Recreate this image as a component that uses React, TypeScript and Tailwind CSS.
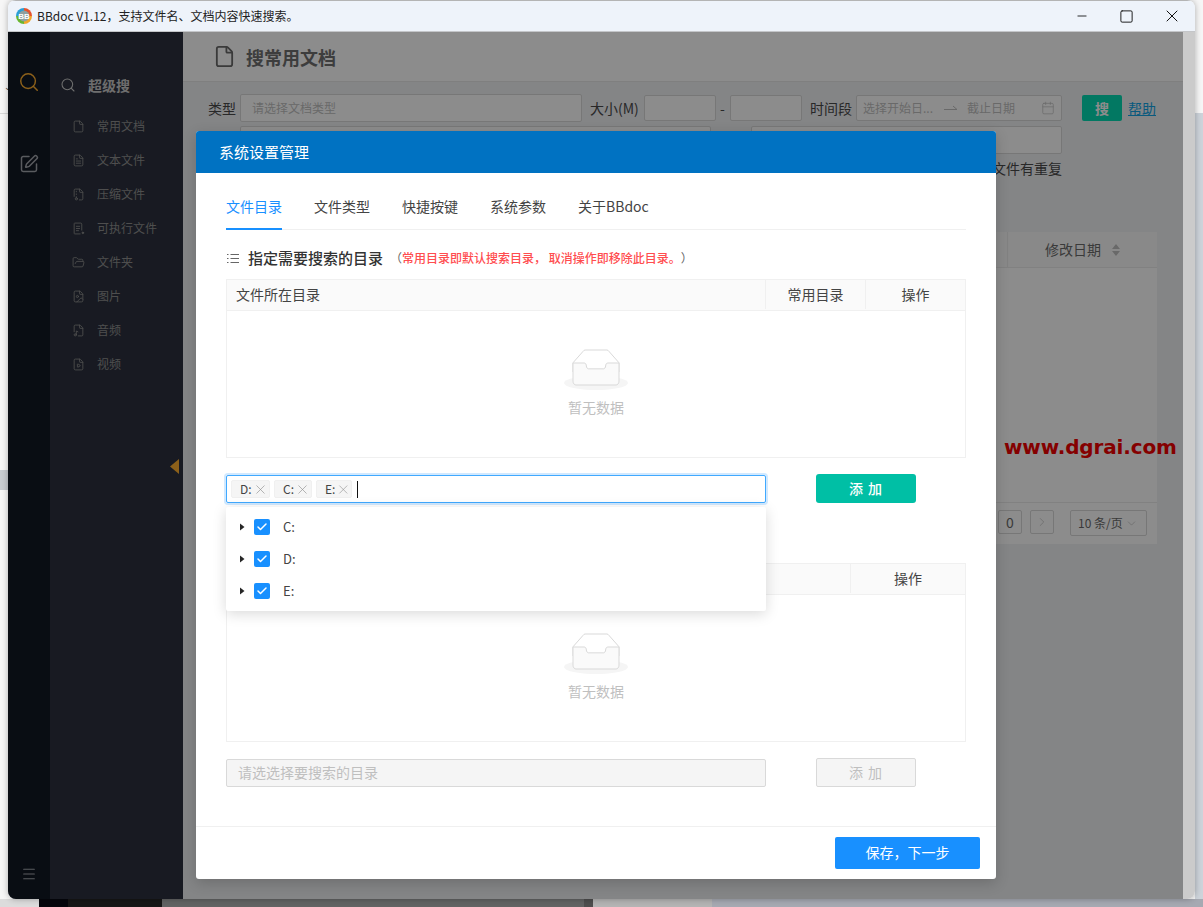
import React from "react";
import { Calendar, Check, ChevronDown, ChevronRight, File, FileArchive, FileImage, FileMusic, FileText, FileVideo, FolderOpen, Menu, Minus, Search, Square, SquarePen, X } from "lucide-react";

function FileExe({ size, strokeWidth }: { size: number; strokeWidth: number }) {
  return (
    <svg width={size} height={size} viewBox="0 0 24 24" fill="none" stroke="currentColor" strokeWidth={strokeWidth} strokeLinecap="round" strokeLinejoin="round">
      <path d="M18 15V4a2 2 0 0 0-2-2H5a1 1 0 0 0-1 1v18a1 1 0 0 0 1 1h10" />
      <path d="M8 8h6M8 12h6M8 16h4" />
      <circle cx="20" cy="20" r="1.5" fill="currentColor" />
    </svg>
  );
}

const sideItems = [
  { label: "常用文档", Icon: File },
  { label: "文本文件", Icon: FileText },
  { label: "压缩文件", Icon: FileArchive },
  { label: "可执行文件", Icon: FileExe },
  { label: "文件夹", Icon: FolderOpen },
  { label: "图片", Icon: FileImage },
  { label: "音频", Icon: FileMusic },
  { label: "视频", Icon: FileVideo },
];

function Empty() {
  return (
    <div className="flex flex-col items-center">
      <svg width="64" height="41" viewBox="0 0 64 41">
        <g transform="translate(0 1)" fill="none" fillRule="evenodd">
          <ellipse fill="#f5f5f5" cx="32" cy="33" rx="32" ry="7" />
          <g fillRule="nonzero" stroke="#d9d9d9">
            <path d="M55 12.76L44.854 1.258C44.367.474 43.656 0 42.907 0H21.093c-.749 0-1.46.474-1.947 1.257L9 12.761V22h46v-9.24z" />
            <path d="M41.613 15.931c0-1.605.994-2.93 2.227-2.931H55v18.137C55 33.26 53.68 35 52.05 35h-40.1C10.32 35 9 33.259 9 31.137V13h11.16c1.233 0 2.227 1.323 2.227 2.928v.022c0 1.605 1.005 2.901 2.237 2.901h14.752c1.232 0 2.237-1.308 2.237-2.913v-.007z" fill="#fafafa" />
          </g>
        </g>
      </svg>
      <div className="mt-[6px] text-[14px] leading-[22px] text-[#bfbfbf]">暂无数据</div>
    </div>
  );
}

function Tag({ t, w }: { t: string; w: string }) {
  return (
    <span className={`flex h-[18px] items-center rounded-[2px] border border-[#f0f0f0] bg-[#f5f5f5] pl-[8px] text-[12px] text-[#444] ${w}`}>
      {t}
      <X size={15} strokeWidth={1} className="ml-[1px] text-[#8c8c8c]" />
    </span>
  );
}

function TreeRow({ t }: { t: string }) {
  return (
    <div className="flex h-[32px] items-center pl-[12px]">
      <svg width="8" height="8" viewBox="0 0 8 8"><path d="M2 0.5 L6.5 4 L2 7.5 Z" fill="#262626" /></svg>
      <span className="ml-[8px] flex h-[16px] w-[16px] items-center justify-center rounded-[2px] bg-[#1890ff]">
        <Check size={12} strokeWidth={3} className="text-white" />
      </span>
      <span className="ml-[13px] text-[13px] text-[#444]">{t}</span>
    </div>
  );
}

function Logo() {
  return (
    <svg width="16" height="16" viewBox="0 0 16 16">
      <path d="M8 8 L8 0 A8 8 0 0 0 0 8 Z" fill="#2a9ed6" />
      <path d="M8 8 L16 8 A8 8 0 0 0 8 0 Z" fill="#e5532d" />
      <path d="M8 8 L8 16 A8 8 0 0 0 16 8 Z" fill="#f2a62a" />
      <path d="M8 8 L0 8 A8 8 0 0 0 8 16 Z" fill="#69b52f" />
      <circle cx="8" cy="8" r="5.4" fill="#8fa0a0" />
      <text x="8" y="11" textAnchor="middle" fontSize="8" fontWeight="700" fill="#fff" fontFamily="Liberation Sans">BB</text>
    </svg>
  );
}

function ListGlyph() {
  return (
    <svg width="12" height="11" viewBox="0 0 12 11" className="text-[#666]">
      <path d="M0 1.5h1.5M3.5 1.5H12M0 5.5h1.5M3.5 5.5H12M0 9.5h1.5M3.5 9.5H12" stroke="currentColor" strokeWidth="1.2" fill="none" />
    </svg>
  );
}

export default function App() {
  return (
    <div className="relative h-[907px] w-[1203px] overflow-hidden bg-[#f6f6f6] font-['Noto_Sans_CJK_SC','Liberation_Sans',sans-serif]">
      {/* desktop behind the window */}
      <div className="absolute left-0 top-[113px] h-px w-[8px] bg-[#d8d8d8]" />
      <div className="absolute left-0 top-[470px] h-[20px] w-[8px] bg-[#c9cdd1]" />
      <div className="absolute left-[4px] top-[82px] text-[9px] leading-none text-[#444]">⌄</div>
      <div className="absolute left-[1195px] top-[113px] h-[794px] w-[8px] bg-[#cdd3da]" />
      <div className="absolute bottom-0 left-0 flex h-[8px] w-[1203px]">
        <div className="w-[39px] bg-[#dcdcdc]" />
        <div className="w-[29px] bg-[#05060c]" />
        <div className="w-[94px] bg-[#161616]" />
        <div className="w-[422px] bg-[#626363]" />
        <div className="w-[9px] bg-[#4e4e4e]" />
        <div className="w-[119px] bg-[#b4b4b4]" />
        <div className="flex-1 bg-[#a6a9b2]" />
      </div>

      {/* application window */}
      <div className="absolute left-[8px] top-0 flex h-[899px] w-[1187px] flex-col overflow-hidden rounded-lg shadow-[0_0_6px_rgba(0,0,0,0.3)]">
        <div className="flex h-[32px] shrink-0 items-center border-b border-t border-b-[#c4c6c9] border-t-[#b4b4b4] bg-[#eef3fa]">
          <div className="ml-[8px]"><Logo /></div>
          <span className="ml-[5px] text-[12px] text-[#222]">BBdoc V1.12，支持文件名、文档内容快速搜索。</span>
          <div className="ml-auto flex items-center text-[#111]">
            <Minus size={14} strokeWidth={1.5} />
            <Square size={15} strokeWidth={1.5} className="ml-[30px]" />
            <X size={20} strokeWidth={1.2} className="ml-[28px] mr-[13px]" />
          </div>
        </div>

        <div className="flex min-h-0 flex-1">
          <div className="relative flex min-w-0 flex-1">
            {/* rail */}
            <div className="flex w-[42px] shrink-0 flex-col items-center bg-[#121824] pt-[39px]">
              <Search size={22} strokeWidth={1.6} className="text-[#ffb030]" />
              <SquarePen size={20} strokeWidth={1.8} className="mt-[61px] text-[#a3a6ad]" />
              <Menu size={16} strokeWidth={1.6} className="mt-auto mb-[17px] text-[#a3a6ad]" />
            </div>
            {/* sidebar */}
            <div className="relative w-[133px] shrink-0 bg-[#2c313e] pt-[42px]">
              <div className="flex h-[22px] items-center pl-[10px] text-[#c8c8c8]">
                <Search size={16} strokeWidth={1.6} />
                <span className="ml-[12px] text-[14px] font-bold">超级搜</span>
              </div>
              <div className="mt-[13px] flex flex-col">
                {sideItems.map(({ label, Icon }) => (
                  <div key={label} className="flex h-[34px] items-center pl-[22px] text-[#8f8f8f]">
                    <Icon size={13} strokeWidth={1.6} />
                    <span className="ml-[12px] text-[12px]">{label}</span>
                  </div>
                ))}
              </div>
              <svg width="10" height="15" viewBox="0 0 10 15" className="absolute left-[120px] top-[427px]"><path d="M9 0 V15 L0 7.5 Z" fill="#ffb030" /></svg>
            </div>
            {/* main */}
            <div className="flex min-w-0 flex-1 flex-col bg-[#f0f2f5]">
              <div className="flex h-[50px] shrink-0 items-center border-b border-[#e8e8e8] bg-white pl-[30px]">
                <File size={23} strokeWidth={1.9} className="text-[#6a6a6a]" />
                <span className="ml-[10px] pt-[1px] text-[18px] font-bold text-[#6f6f6f]">搜常用文档</span>
              </div>
              <div className="pl-[25px] pr-[26px] text-[14px] text-[#4a4a4a]">
                <div className="mt-[12px] flex h-[28px] items-center">
                  <span className="w-[32px]">类型</span>
                  <div className="flex h-[28px] w-[342px] items-center rounded-[2px] border border-[#d9d9d9] bg-white pl-[11px] text-[12px] text-[#bfbfbf]">请选择文档类型</div>
                  <span className="ml-[8px] w-[54px]">大小(M)</span>
                  <div className="h-[26px] w-[72px] rounded-[2px] border border-[#d9d9d9] bg-white" />
                  <span className="w-[14px] pl-[4px]">-</span>
                  <div className="h-[26px] w-[72px] rounded-[2px] border border-[#d9d9d9] bg-white" />
                  <span className="ml-[8px] w-[46px]">时间段</span>
                  <div className="flex h-[26px] w-[206px] items-center rounded-[2px] border border-[#d9d9d9] bg-white pl-[6px] pr-[6px] text-[12px] text-[#bfbfbf]">
                    <span>选择开始日...</span>
                    <svg width="14" height="6" viewBox="0 0 14 6" className="ml-[11px]"><path d="M0 4.5H13L9 1" stroke="#bfbfbf" strokeWidth="1" fill="none" /></svg>
                    <span className="ml-[9px]">截止日期</span>
                    <Calendar size={14} strokeWidth={1.2} className="ml-auto" />
                  </div>
                  <div className="ml-[20px] flex h-[26px] w-[40px] items-center justify-center rounded-[2px] bg-[#05dab2] font-bold text-white">搜</div>
                  <span className="ml-[6px] text-[#12a4e6] underline">帮助</span>
                </div>
                <div className="mt-[4px] flex">
                  <div className="ml-[32px] h-[27px] w-[471px] rounded-[2px] border border-[#d9d9d9] bg-white" />
                  <div className="ml-[40px] h-[28px] w-[311px] rounded-[2px] border border-[#d9d9d9] bg-white" />
                </div>
                <div className="mt-[3px] flex h-[22px] w-[854px] items-center justify-end">文件有重复</div>
              </div>
              <div className="ml-[13px] mr-[26px] mt-[53px] flex h-[312px] flex-col bg-white">
                <div className="flex h-[36px] shrink-0 items-stretch border-b border-[#ececec] bg-[#fafafa]">
                  <div className="flex-1" />
                  <div className="flex w-[150px] items-center border-l border-[#ececec] pl-[37px] text-[14px] text-[#6b6b6b]">
                    修改日期
                    <svg width="10" height="14" viewBox="0 0 10 14" className="ml-[10px]"><path d="M5 1 L9 6 H1 Z M5 13 L9 8 H1 Z" fill="#bfbfbf" /></svg>
                  </div>
                </div>
                <div className="flex-1" />
                <div className="flex h-[42px] shrink-0 items-start justify-end border-t border-[#ececec] pr-[10px] pt-[7px] text-[#6b6b6b]">
                  <div className="flex h-[24px] w-[24px] items-center justify-center rounded-[2px] border border-[#d9d9d9] text-[14px]">0</div>
                  <div className="ml-[8px] flex h-[24px] w-[24px] items-center justify-center rounded-[2px] border border-[#d9d9d9] text-[#bfbfbf]"><ChevronRight size={14} strokeWidth={1.2} /></div>
                  <div className="ml-[16px] flex h-[26px] w-[77px] items-center rounded-[2px] border border-[#d9d9d9] pl-[7px] text-[12px]">
                    10 条/页<ChevronDown size={13} strokeWidth={1} className="ml-[2px] text-[#aaa]" />
                  </div>
                </div>
              </div>
            </div>
            {/* mask */}
            <div className="absolute inset-0 bg-black/45" />
          </div>
          <div className="w-[12px] shrink-0 bg-[#cbcbcb]" />
        </div>
      </div>

      {/* watermark */}
      <div className="absolute left-[1004px] top-[434px] whitespace-nowrap text-[20px] font-bold leading-[26px] tracking-[-0.15px] text-[#850000] font-['DejaVu_Sans',sans-serif]">www.dgrai.com</div>

      {/* dialog */}
      <div className="absolute left-[196px] top-[131px] flex h-[748px] w-[800px] flex-col rounded-[3px] bg-white shadow-[0_4px_14px_rgba(0,0,0,0.18)]">
        <div className="flex h-[42px] shrink-0 items-center rounded-t-[3px] bg-[#0072c2] pl-[23px] text-[15px] text-white">系统设置管理</div>
        <div className="flex-1 px-[30px] pt-[22px]">
          <div className="flex h-[35px] gap-[32px] border-b border-[#f0f0f0] text-[14px] text-[#444]">
            <span className="h-[35px] border-b-2 border-[#1890ff] leading-[22px] text-[#1890ff]">文件目录</span>
            <span className="leading-[22px]">文件类型</span>
            <span className="leading-[22px]">快捷按键</span>
            <span className="leading-[22px]">系统参数</span>
            <span className="leading-[22px]">关于BBdoc</span>
          </div>
          <div className="mt-[17px] flex h-[22px] items-center pl-[1px]">
            <ListGlyph />
            <span className="ml-[9px] text-[15px] font-medium text-[#333]">指定需要搜索的目录</span>
            <span className="ml-[7px] text-[12px] text-[#666]">（</span>
            <span className="text-[12px] font-medium text-[#ff4d4f]">常用目录即默认搜索目录， 取消操作即移除此目录。</span>
            <span className="text-[12px] text-[#666]">）</span>
          </div>
          <div className="mt-[10px] flex h-[179px] flex-col border border-[#f0f0f0]">
            <div className="flex h-[31px] shrink-0 items-center border-b border-[#f0f0f0] bg-[#fafafa] pb-[1px] text-[14px] text-[#444]">
              <div className="flex-1 pl-[9px]">文件所在目录</div>
              <div className="flex h-full w-[100px] items-center justify-center border-l border-[#f0f0f0]">常用目录</div>
              <div className="flex h-full w-[100px] items-center justify-center border-l border-[#f0f0f0]">操作</div>
            </div>
            <div className="flex flex-1 justify-center pt-[38px]"><Empty /></div>
          </div>
          <div className="relative mt-[16px] flex h-[29px] items-end">
            <div className="flex h-[28px] w-[540px] items-center gap-[4px] rounded-[2px] border border-[#40a9ff] pl-[4px] shadow-[0_0_0_2px_rgba(24,144,255,0.2)]">
              <Tag t="D:" w="w-[39px]" />
              <Tag t="C:" w="w-[38px]" />
              <Tag t="E:" w="w-[36px]" />
              <span className="ml-[1px] h-[17px] w-px bg-[#111]" />
            </div>
            <div className="ml-[50px] flex h-[29px] w-[100px] items-center justify-center rounded-[3px] bg-[#00bfa5] text-[14px] font-medium tracking-[1px] text-white">添 加</div>
            <div className="absolute left-0 top-[33px] z-10 flex h-[104px] w-[540px] flex-col rounded-[2px] bg-white py-[4px] shadow-[0_3px_14px_rgba(0,0,0,0.15)]">
              <TreeRow t="C:" />
              <TreeRow t="D:" />
              <TreeRow t="E:" />
            </div>
          </div>
          <div className="mt-[60px] flex h-[179px] flex-col border border-[#f0f0f0]">
            <div className="flex h-[31px] shrink-0 items-center border-b border-[#f0f0f0] bg-[#fafafa] pb-[1px] text-[14px] text-[#444]">
              <div className="flex-1" />
              <div className="flex h-full w-[115px] items-center justify-center border-l border-[#f0f0f0]">操作</div>
            </div>
            <div className="flex flex-1 justify-center pt-[38px]"><Empty /></div>
          </div>
          <div className="mt-[16px] flex h-[29px] items-end">
            <div className="flex h-[28px] w-[540px] items-center rounded-[2px] border border-[#d9d9d9] bg-[#f5f5f5] pb-[2px] pl-[11px] text-[14px] text-[#bfbfbf]">请选选择要搜索的目录</div>
            <div className="ml-[50px] flex h-[29px] w-[100px] items-center justify-center rounded-[2px] border border-[#d9d9d9] bg-[#f5f5f5] pb-[1px] text-[14px] tracking-[1px] text-[#bfbfbf]">添 加</div>
          </div>
        </div>
        <div className="flex h-[53px] shrink-0 items-center justify-end border-t border-[#f0f0f0] pr-[16px]">
          <div className="flex h-[32px] w-[145px] items-center justify-center rounded-[2px] bg-[#1890ff] pb-[2px] text-[14px] text-white">保存，下一步</div>
        </div>
      </div>
    </div>
  );
}
